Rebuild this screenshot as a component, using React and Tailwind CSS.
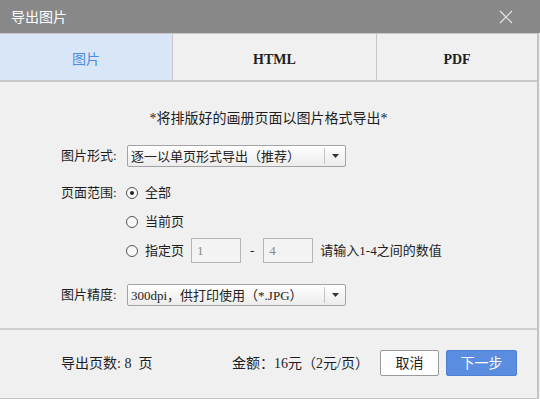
import React from "react";

const serif = { fontFamily: '"Liberation Serif", "Noto Sans CJK SC", serif' };

function Select({ text }) {
  return (
    <div className="flex h-[22px] w-[219px] items-stretch rounded-[2px] border border-[#a3a3a3] bg-gradient-to-b from-[#ffffff] to-[#ececec]">
      <div className="flex flex-1 items-center pl-[3px] text-[13px] leading-none text-[#222]">{text}</div>
      <div className="w-px bg-[#c4c4c4] my-[2px]" />
      <div className="flex w-[20px] items-center justify-center">
        <svg width="7" height="4" viewBox="0 0 7 4"><path d="M0 0H7L3.5 4Z" fill="#333" /></svg>
      </div>
    </div>
  );
}

function Radio({ checked }) {
  return (
    <div className="flex h-[12px] w-[12px] items-center justify-center rounded-full border border-[#555] bg-[#f7f7f7]">
      {checked && <div className="h-[4px] w-[4px] rounded-full bg-[#222]" />}
    </div>
  );
}

export default function App() {
  return (
    <div className="h-[399px] w-[540px] overflow-hidden bg-[#f0f0f0] text-[#1e1e1e]" style={serif}>
      <div className="flex h-[33px] items-center justify-between bg-[#878887] pl-[11px] pr-[27px]">
        <span className="text-[14px] text-white" style={{ fontFamily: '"Noto Sans CJK SC", sans-serif' }}>导出图片</span>
        <svg width="14" height="14" viewBox="0 0 14 14"><path d="M1 1L13 13M13 1L1 13" stroke="#e6e6e6" strokeWidth="1.2" /></svg>
      </div>
      <div className="flex h-[366px] w-[539px] flex-col border-r-2 border-b border-[#c3c3c3]">
        <div className="flex h-[49px] border-t border-b-2 border-[#c8c8c8]">
          <div className="flex w-[172px] items-center justify-center bg-[#d8e6f8] pt-[4px] text-[14px] text-[#4f8be2]">图片</div>
          <div className="flex w-[204px] items-center justify-center border-l border-[#c8c8c8] pt-[4px] text-[14px] font-bold">HTML</div>
          <div className="flex flex-1 items-center justify-center border-l border-[#c8c8c8] pt-[4px] text-[14px] font-bold">PDF</div>
        </div>
        <div className="flex h-[248px] flex-col border-b-2 border-[#cfcfcf]">
          <div className="mt-[27px] h-[20px] text-center text-[14px] leading-[20px]">*将排版好的画册页面以图片格式导出*</div>
          <div className="mt-[16px] flex items-center">
            <div className="w-[127px] pl-[61px] text-[13px]">图片形式:</div>
            <Select text="逐一以单页形式导出（推荐）" />
          </div>
          <div className="mt-[15px] flex h-[22px] items-center">
            <div className="w-[126px] pl-[61px] text-[13px]">页面范围:</div>
            <Radio checked />
            <span className="ml-[7px] text-[13px]">全部</span>
          </div>
          <div className="mt-[7px] flex h-[22px] items-center pl-[126px]">
            <Radio />
            <span className="ml-[7px] text-[13px]">当前页</span>
          </div>
          <div className="mt-[5px] flex h-[25px] items-center pl-[126px]">
            <Radio />
            <span className="ml-[7px] text-[13px]">指定页</span>
            <div className="ml-[7px] flex h-[25px] w-[50px] items-center border border-[#b5b5b5] bg-[#f3f3f3] pl-[5px] text-[13px] text-[#8a8a8a]">1</div>
            <span className="mx-[9px] text-[13px]">-</span>
            <div className="flex h-[25px] w-[50px] items-center border border-[#b5b5b5] bg-[#f3f3f3] pl-[5px] text-[13px] text-[#8a8a8a]">4</div>
            <span className="ml-[7px] text-[13px]">请输入1-4之间的数值</span>
          </div>
          <div className="mt-[21px] flex items-center">
            <div className="w-[127px] pl-[61px] text-[13px]">图片精度:</div>
            <Select text="300dpi，供打印使用（*.JPG）" />
          </div>
        </div>
        <div className="flex flex-1 items-center pb-[2px] text-[14px]">
          <div className="w-[232px] whitespace-pre pl-[61px]">导出页数: 8  页</div>
          <div className="flex-1">金额：16元（2元/页）</div>
          <div className="flex h-[26px] w-[59px] items-center justify-center rounded-[2px] border border-[#9a9a9a] bg-white text-[14px]">取消</div>
          <div className="ml-[7px] mr-[20px] flex h-[26px] w-[71px] items-center justify-center rounded-[2px] border border-[#4d80d3] bg-[#5a8ce0] text-[14px] text-white">下一步</div>
        </div>
      </div>
    </div>
  );
}
